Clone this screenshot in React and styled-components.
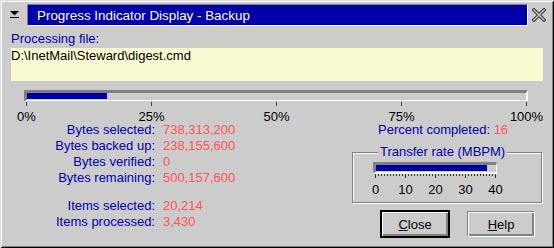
import React from 'react'
import styled, { createGlobalStyle } from 'styled-components'

const BLUE = '#0000aa'
const RED = '#ff5555'
const FACE = '#cccccc'

const GlobalStyle = createGlobalStyle`
  html, body {
    margin: 0;
    padding: 0;
    background: ${FACE};
  }
  body {
    font-family: "Liberation Sans", Arial, sans-serif;
    font-size: 13px;
  }
`

const Window = styled.div`
  box-sizing: border-box;
  width: 554px;
  height: 248px;
  padding-top: 4px;
  background: ${FACE};
  box-shadow: inset 1px 1px #dfdfdf, inset -1px -1px #000, inset 2px 2px #fff, inset -2px -2px #808080;
  display: flex;
  flex-direction: column;
  overflow: hidden;
`

const TitleRow = styled.div`
  display: flex;
  align-items: center;
  height: 22px;
`

const MenuButton = styled.div`
  box-sizing: border-box;
  width: 27px;
  padding-left: 10px;
  display: flex;
  align-items: center;
`

const TitleBar = styled.div`
  box-sizing: border-box;
  width: 501px;
  height: 22px;
  padding-left: 9px;
  background: ${BLUE};
  border: 1px solid;
  border-color: #808080 #fff #fff #808080;
  color: #fff;
  display: flex;
  align-items: center;
  font-size: 13.4px;
`

const CloseGlyph = styled.div`
  margin-left: 4px;
  display: flex;
`

const Content = styled.div`
  padding: 0 11px;
  display: flex;
  flex-direction: column;
`

const FieldLabel = styled.div`
  margin-top: 5px;
  line-height: 16px;
  color: ${BLUE};
`

const FileBox = styled.div`
  margin-top: 1px;
  height: 33px;
  background: #fafad2;
  line-height: 16px;
  color: #000;
`

const Track = styled.div`
  box-sizing: border-box;
  width: ${p => p.$width}px;
  height: 11px;
  border-style: solid;
  border-width: 3px 1px 1px 3px;
  border-color: #808080 #fff #fff #808080;
  background: ${FACE};
`

const ProgressTrack = styled(Track)`
  margin: 9px 0 0 13px;
  border-right-width: 2px;
`

const Fill = styled.div`
  height: 6px;
  background: ${BLUE};
`

const TickRow = styled.div`
  margin: 1px 0 0 13px;
  width: 504px;
  box-sizing: border-box;
  height: 4px;
  padding: 0 1px 0 2px;
  display: flex;
  justify-content: space-between;
`

const Tick = styled.div`
  width: 1px;
  background: #404040;
`

const ScaleLabels = styled.div`
  box-sizing: border-box;
  width: ${p => p.$width}px;
  margin: ${p => p.$margin};
  height: ${p => p.$height}px;
  line-height: ${p => p.$lineHeight}px;
  clip-path: ${p => (p.$clip ? 'inset(0 -40px 0 -40px)' : 'none')};
  padding: 0 1px 0 2px;
  display: flex;
  justify-content: space-between;
  color: #000;
`

const ScaleLabel = styled.div`
  width: 1px;
  display: flex;
  justify-content: center;
  white-space: nowrap;
`

const Lower = styled.div`
  display: flex;
`

const LeftColumn = styled.div`
  width: 341px;
  flex: none;
`

const RightColumn = styled.div`
  width: 190px;
  flex: none;
  display: flex;
  flex-direction: column;
`

const StatsGrid = styled.div`
  display: grid;
  grid-template-columns: 144px auto;
  column-gap: 8px;
  line-height: 16px;
`

const StatLabel = styled.div`
  text-align: right;
  color: ${BLUE};
`

const StatValue = styled.div`
  color: ${RED};
`

const Spacer = styled.div`
  grid-column: 1 / -1;
  height: 12px;
`

const PercentLine = styled.div`
  padding-left: 26px;
  line-height: 16px;
  white-space: nowrap;
  color: ${BLUE};

  span {
    color: ${RED};
  }
`

const GroupBox = styled.fieldset`
  box-sizing: border-box;
  width: 190px;
  min-width: 0;
  margin: 7px 0 0 0;
  padding: 0 0 4px 20px;
  border: 1px solid #808080;
  box-shadow: inset 1px 1px #fff, 1px 1px #fff;
`

const GroupLegend = styled.legend`
  margin-left: 5px;
  padding: 0 2px;
  line-height: 14px;
  color: ${BLUE};
  background: ${FACE};
`

const GaugeTrack = styled(Track)`
  margin-top: 3px;
`

const ButtonRow = styled.div`
  margin-top: 7px;
  padding-left: 28px;
  display: flex;
  align-items: center;
  gap: 17px;
`

const Button = styled.button`
  box-sizing: border-box;
  width: ${p => (p.$default ? 70 : 68)}px;
  height: ${p => (p.$default ? 28 : 26)}px;
  padding: 0;
  background: ${FACE};
  font-family: "Liberation Sans", Arial, sans-serif;
  font-size: 13px;
  color: #000;
  border: ${p => (p.$default ? '2px solid #000' : '1px solid')};
  border-color: ${p => (p.$default ? '#000' : '#808080 #fff #fff #808080')};
  box-shadow: inset 1px 1px #fff, inset -2px -2px #808080;
`

const MenuIcon = () => (
  <svg width="10" height="8" viewBox="0 0 10 8">
    <polygon points="0,0 9,0 4.5,4.5" fill="#000" />
    <rect x="0" y="6" width="9" height="1" fill="#000" />
  </svg>
)

const CloseIcon = () => (
  <svg width="14" height="14" viewBox="0 0 14 14">
    <g strokeLinecap="square">
      <path d="M2 2 L12 12 M12 2 L2 12" stroke="#404040" strokeWidth="3.6" />
      <path d="M2 2 L12 12 M12 2 L2 12" stroke="#c4c4c4" strokeWidth="1.4" />
    </g>
  </svg>
)

const GaugeTicks = () => (
  <svg width="124" height="5" viewBox="0 0 124 5" style={{ display: 'block' }}>
    <rect x="0" y="0" width="124" height="1" fill="#fff" />
    {Array.from({ length: 41 }, (_, i) => (
      <rect key={i} x={2 + i * 3} y="1" width="1" height={i % 10 === 0 ? 4 : 2} fill="#303030" />
    ))}
  </svg>
)

const stats = [
  ['Bytes selected:', '738,313,200'],
  ['Bytes backed up:', '238,155,600'],
  ['Bytes verified:', '0'],
  ['Bytes remaining:', '500,157,600'],
  null,
  ['Items selected:', '20,214'],
  ['Items processed:', '3,430'],
]

const percent = 16
const rate = 37

export default function App() {
  return (
    <>
      <GlobalStyle />
      <Window>
        <TitleRow>
          <MenuButton>
            <MenuIcon />
          </MenuButton>
          <TitleBar>Progress Indicator Display - Backup</TitleBar>
          <CloseGlyph>
            <CloseIcon />
          </CloseGlyph>
        </TitleRow>
        <Content>
          <FieldLabel>Processing file:</FieldLabel>
          <FileBox>D:\InetMail\Steward\digest.cmd</FileBox>

          <ProgressTrack $width={504}>
            <Fill style={{ width: `${percent}%` }} />
          </ProgressTrack>
          <TickRow>
            {[0, 1, 2, 3, 4].map(i => <Tick key={i} />)}
          </TickRow>
          <ScaleLabels $width={504} $margin="6px 0 0 13px" $height={10} $lineHeight={10} $clip>
            {['0%', '25%', '50%', '75%', '100%'].map(t => (
              <ScaleLabel key={t}>{t}</ScaleLabel>
            ))}
          </ScaleLabels>

          <Lower>
            <LeftColumn>
              <StatsGrid>
                {stats.map((row, i) =>
                  row ? (
                    <React.Fragment key={i}>
                      <StatLabel>{row[0]}</StatLabel>
                      <StatValue>{row[1]}</StatValue>
                    </React.Fragment>
                  ) : (
                    <Spacer key={i} />
                  )
                )}
              </StatsGrid>
            </LeftColumn>
            <RightColumn>
              <PercentLine>
                Percent completed: <span>{percent}</span>
              </PercentLine>
              <GroupBox>
                <GroupLegend>Transfer rate (MBPM)</GroupLegend>
                <GaugeTrack $width={124}>
                  <Fill style={{ width: `${(rate / 40) * 100}%` }} />
                </GaugeTrack>
                <GaugeTicks />
                <ScaleLabels $width={124} $margin="4px 0 0 0" $height={16} $lineHeight={16}>
                  {['0', '10', '20', '30', '40'].map(t => (
                    <ScaleLabel key={t}>{t}</ScaleLabel>
                  ))}
                </ScaleLabels>
              </GroupBox>
              <ButtonRow>
                <Button $default>
                  <u>C</u>lose
                </Button>
                <Button>
                  <u>H</u>elp
                </Button>
              </ButtonRow>
            </RightColumn>
          </Lower>
        </Content>
      </Window>
    </>
  )
}
